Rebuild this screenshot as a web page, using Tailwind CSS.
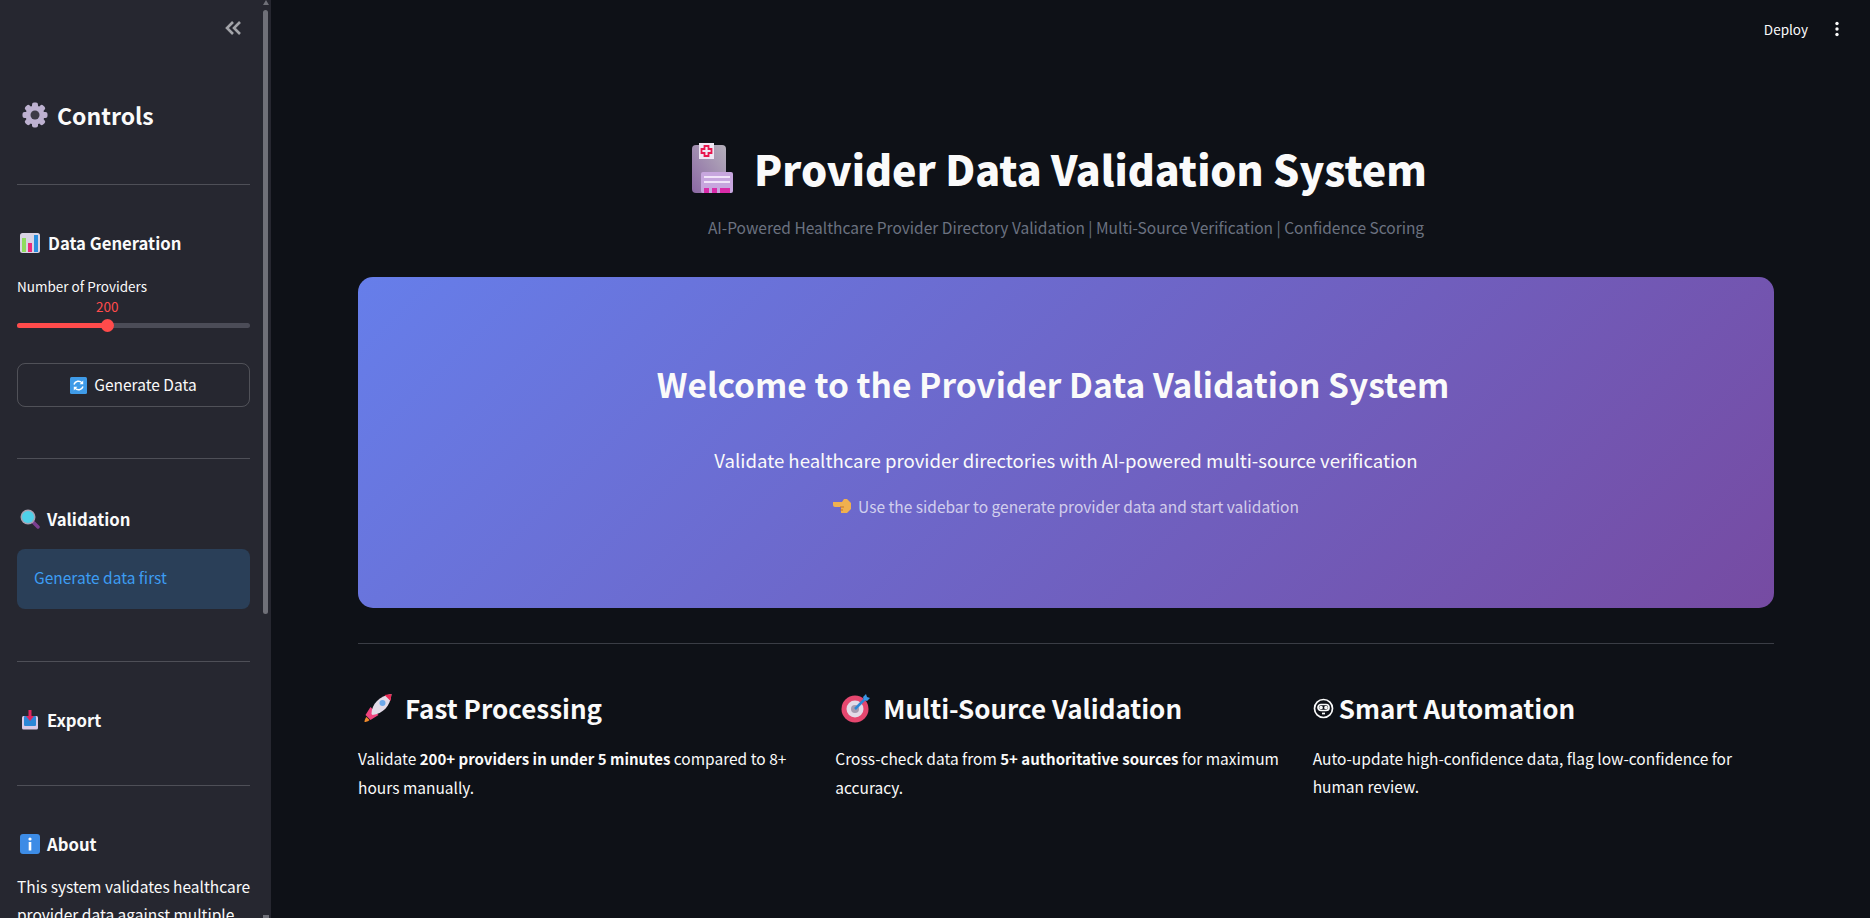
<!DOCTYPE html>
<html lang="en">
<head>
  <meta charset="UTF-8">
  <meta name="viewport" content="width=device-width, initial-scale=1.0">
  <title>Provider Data Validation System</title>
  <script src="https://cdn.jsdelivr.net/npm/@tailwindcss/browser@4"></script>
</head>
<body class="bg-[#0e1117] text-[#fafafa] h-screen overflow-hidden flex font-['Noto_Sans_CJK_SC','Noto_Sans',sans-serif]">

  <!-- Sidebar -->
  <aside class="relative w-[271px] h-[918px] shrink-0 overflow-hidden bg-[#262730]">
    <!-- scrollbar -->
    <div class="absolute left-[263px] top-[10px] w-[5px] h-[604px] rounded-full bg-[#6f7078]"></div>
    <div class="absolute left-[263px] top-0 w-0 h-0 border-x-[3px] border-x-transparent border-b-[5px] border-b-[#6f7078]"></div>
    <div class="absolute left-[263px] top-[915px] w-[6px] h-[3px] bg-[#6f7078]"></div>

    <div class="w-[233px] ml-[17px]">
      <div class="h-[56px] flex items-center justify-end pr-[9px]">
        <svg width="16" height="14" viewBox="0 0 16 14" fill="none" stroke="#a3a4a9" stroke-width="2.6"><path d="M8 1 2 7l6 6M15 1 9 7l6 6"/></svg>
      </div>

      <div class="mt-[40px] h-[38px] flex items-center gap-[9px]">
        <svg class="ml-[5px]" width="26" height="26" viewBox="0 0 26 26"><g fill="#bdb1d0"><circle cx="13" cy="13" r="9.5"/><rect x="10" y="0.5" width="6" height="25" rx="2"/><rect x="10" y="0.5" width="6" height="25" rx="2" transform="rotate(45 13 13)"/><rect x="10" y="0.5" width="6" height="25" rx="2" transform="rotate(90 13 13)"/><rect x="10" y="0.5" width="6" height="25" rx="2" transform="rotate(135 13 13)"/></g><circle cx="13" cy="13" r="4.5" fill="#3d3a45"/></svg>
        <h2 class="text-[23px] leading-[38px] font-semibold">Controls</h2>
      </div>

      <hr class="mt-[50px] border-0 h-px bg-[#4e4f57]">

      <div class="mt-[45px] h-[26px] flex items-center gap-[8px]">
        <svg class="ml-[3px]" width="20" height="20" viewBox="0 0 20 20"><rect width="20" height="20" rx="2.5" fill="#d9d4e4"/><rect x="2" y="5" width="4" height="14" fill="#8fdc5e"/><rect x="8" y="10" width="4" height="9" fill="#ec2a7b"/><rect x="14" y="2" width="4" height="17" fill="#2b8fe0"/></svg>
        <h3 class="text-[16.7px] leading-[26px] font-semibold">Data Generation</h3>
      </div>

      <div class="mt-[20px] text-[13.5px] leading-[20px]">Number of Providers</div>
      <div class="relative h-[38px]">
        <div class="absolute left-[79px] top-0 text-[13.5px] leading-[20px] text-[#ff4b4b]">200</div>
        <div class="absolute left-0 right-0 top-[27px] h-[5px] rounded-full bg-[#4b4c57]"></div>
        <div class="absolute left-0 top-[27px] w-[90px] h-[5px] rounded-l-full bg-[#ff4b4b]"></div>
        <div class="absolute left-[84px] top-[23px] w-[13px] h-[13px] rounded-full bg-[#ff4b4b]"></div>
      </div>

      <button class="mt-[29px] w-full h-[44px] rounded-[8px] border border-[#fafafa]/20 flex items-center justify-center gap-[7px] text-[15.5px]">
        <svg width="17" height="17" viewBox="0 0 17 17"><rect width="17" height="17" rx="1.5" fill="#3f9be8"/><path d="M4 7.5a4.6 4.6 0 0 1 8-1.6M13 9.5a4.6 4.6 0 0 1-8 1.6" fill="none" stroke="#fff" stroke-width="1.5"/><path d="M13.2 3.6v3.6H9.6ZM3.8 13.4V9.8h3.6Z" fill="#fff"/></svg>
        Generate Data
      </button>

      <hr class="mt-[51px] border-0 h-px bg-[#4e4f57]">

      <div class="mt-[47px] h-[26px] flex items-center gap-[7px]">
        <svg class="ml-[3px]" width="20" height="20" viewBox="0 0 20 20"><path d="M12.5 12.5 18 18" stroke="#7b3f8f" stroke-width="3.5" stroke-linecap="round"/><circle cx="8" cy="8" r="7.5" fill="#a7a3b3"/><circle cx="8" cy="8" r="6" fill="#4fd0ea"/></svg>
        <h3 class="text-[16.7px] leading-[26px] font-semibold">Validation</h3>
      </div>

      <div class="mt-[17px] h-[60px] rounded-[8px] bg-[#2a3f58] pl-[17px] pb-[2px] flex items-center text-[15.5px] text-[#3d9df3]">Generate data first</div>

      <hr class="mt-[52px] border-0 h-px bg-[#4e4f57]">

      <div class="mt-[45px] h-[26px] flex items-center gap-[9px]">
        <svg class="ml-[5px]" width="16" height="20" viewBox="0 0 16 20"><rect y="6" width="16" height="13.5" rx="1.5" fill="#d9c9e6"/><rect x="2" y="6" width="12" height="10" rx="1" fill="#2b86d6"/><path d="M6.5 0h3v6h2.5L8 11 4 6h2.5Z" fill="#e0245e"/></svg>
        <h3 class="text-[16.7px] leading-[26px] font-semibold">Export</h3>
      </div>

      <hr class="mt-[52px] border-0 h-px bg-[#4e4f57]">

      <div class="mt-[45px] h-[26px] flex items-center gap-[7px]">
        <svg class="ml-[3px]" width="20" height="20" viewBox="0 0 20 20"><rect width="20" height="20" rx="3" fill="#3d8ce6"/><rect x="8.7" y="8" width="2.6" height="8.5" fill="#fff"/><circle cx="10" cy="5" r="1.6" fill="#fff"/></svg>
        <h3 class="text-[16.7px] leading-[26px] font-semibold">About</h3>
      </div>

      <p class="mt-[15px] text-[15.5px] leading-[28px] whitespace-nowrap">This system validates healthcare<br>provider data against multiple</p>
    </div>
  </aside>

  <!-- Main -->
  <main class="flex-1 min-w-0 relative">
    <header class="absolute top-0 right-0 h-[58px] flex items-center gap-[20px] pr-[24px] text-[13.5px]">
      <span>Deploy</span>
      <svg width="18" height="18" viewBox="0 0 18 18" fill="#fafafa"><circle cx="9" cy="3.5" r="1.7"/><circle cx="9" cy="9" r="1.7"/><circle cx="9" cy="14.5" r="1.7"/></svg>
    </header>

    <div class="pl-[87px] pr-[96px] pt-[136px]">
      <div class="h-[64px] flex items-center justify-center gap-[21px] pr-[13px]">
        <svg width="41" height="50" viewBox="0 0 41 50">
          <defs><linearGradient id="bld" x1="0" y1="1" x2="1" y2="0"><stop offset="0" stop-color="#8b68a4"/><stop offset="1" stop-color="#b5b0bb"/></linearGradient></defs>
          <rect x="0" y="2" width="34" height="48" rx="4" fill="url(#bld)"/>
          <rect x="7" y="0" width="15" height="16" fill="#efe7f4"/>
          <path d="M12.5 3h4v3h3v4h-3v3h-4v-3h-3V6h3Z" fill="none" stroke="#e8174f" stroke-width="1.8"/>
          <rect x="9" y="29" width="32" height="21" rx="2" fill="#c7a6de"/>
          <rect x="12" y="33" width="26" height="2" fill="#f1e4f9"/><rect x="12" y="38" width="26" height="2" fill="#f1e4f9"/>
          <rect x="12" y="45" width="5" height="5" fill="#d92ba8"/><rect x="20" y="45" width="5" height="5" fill="#d92ba8"/><rect x="28" y="45" width="10" height="5" fill="#d92ba8"/>
        </svg>
        <h1 class="text-[41.2px] leading-[64px] font-black">Provider Data Validation System</h1>
      </div>
      <p class="mt-[15px] text-center text-[15.5px] leading-[24px] text-[#6b7280]">AI-Powered Healthcare Provider Directory Validation | Multi-Source Verification | Confidence Scoring</p>

      <section class="mt-[38px] h-[331px] rounded-[15px] bg-[linear-gradient(135deg,#667eea,#764ba2)] text-center pt-[83px]">
        <h2 class="pr-[26px] text-[33.5px] leading-[48px] font-semibold">Welcome to the Provider Data Validation System</h2>
        <p class="mt-[38px] text-[18.6px] leading-[28px]">Validate healthcare provider directories with AI-powered multi-source verification</p>
        <p class="mt-[20px] flex items-center justify-center gap-[6px] text-[15.5px] leading-[24px] text-white/70">
          <svg width="19" height="16" viewBox="0 0 19 16"><path d="M0 4h9l2-3h3l4 4v6l-4 4H8V9H2a2 2 0 0 1-2-2Z" fill="#f0b04e"/><path d="M7 9h4M7 12h3" stroke="#c2722e" stroke-width="1.2"/></svg>
          Use the sidebar to generate provider data and start validation
        </p>
      </section>

      <hr class="mt-[35px] border-0 h-px bg-[#3a3d45]">

      <div class="mt-[41px] grid grid-cols-3 gap-x-[16px]">
        <div>
          <h3 class="h-[46px] flex items-center gap-[12px] pl-[4px] text-[26px] leading-[46px] font-semibold">
            <svg width="31" height="30" viewBox="0 0 30 30"><path d="M3 22 8 14l8 8-8 5Z" fill="#f0447e"/><path d="M4 24c-2 2-2 5-2 5s3 0 5-2Z" fill="#f08a2c"/><path d="M9 21C9 11 17 3 29 1c-1 12-9 20-19 21Z" fill="#e3dbe8"/><path d="M22 2l7-1-1 7Z" fill="#ea2a55"/><circle cx="20" cy="10" r="3" fill="#6ea9ea"/></svg>
            Fast Processing
          </h3>
          <p class="mt-[13px] text-[15.5px] leading-[28px]">Validate <strong class="text-[15px] font-semibold">200+ providers in under 5 minutes</strong> compared to 8+ hours manually.</p>
        </div>
        <div>
          <h3 class="h-[46px] flex items-center gap-[12px] pl-[6px] text-[26px] leading-[46px] font-semibold">
            <svg width="30" height="30" viewBox="0 0 30 30"><circle cx="14" cy="16" r="13.5" fill="#e5476f"/><circle cx="14" cy="16" r="8.5" fill="#e3dbe8"/><circle cx="14" cy="16" r="4" fill="#a59bb0"/><path d="M14 16 25 5" stroke="#2b86d6" stroke-width="2.5"/><path d="M22 4l3-3 1 3 3 1-3 3-3-1Z" fill="#3a97e6"/></svg>
            Multi-Source Validation
          </h3>
          <p class="mt-[13px] text-[15.5px] leading-[28px]">Cross-check data from <strong class="text-[15px] font-semibold">5+ authoritative sources</strong> for maximum accuracy.</p>
        </div>
        <div>
          <h3 class="h-[46px] flex items-center gap-[5px] text-[26px] leading-[46px] font-semibold">
            <svg width="21" height="21" viewBox="0 0 21 21" fill="none" stroke="#fafafa" stroke-width="1.7"><circle cx="10.5" cy="10.5" r="9"/><rect x="5" y="6.5" width="11" height="6" rx="3"/><circle cx="8" cy="9.5" r="1"/><circle cx="13" cy="9.5" r="1"/><path d="M9 15.5h3"/></svg>
            Smart Automation
          </h3>
          <p class="mt-[13px] text-[15.5px] leading-[28px]">Auto-update high-confidence data, flag low-confidence for human review.</p>
        </div>
      </div>
    </div>
  </main>

</body>
</html>
